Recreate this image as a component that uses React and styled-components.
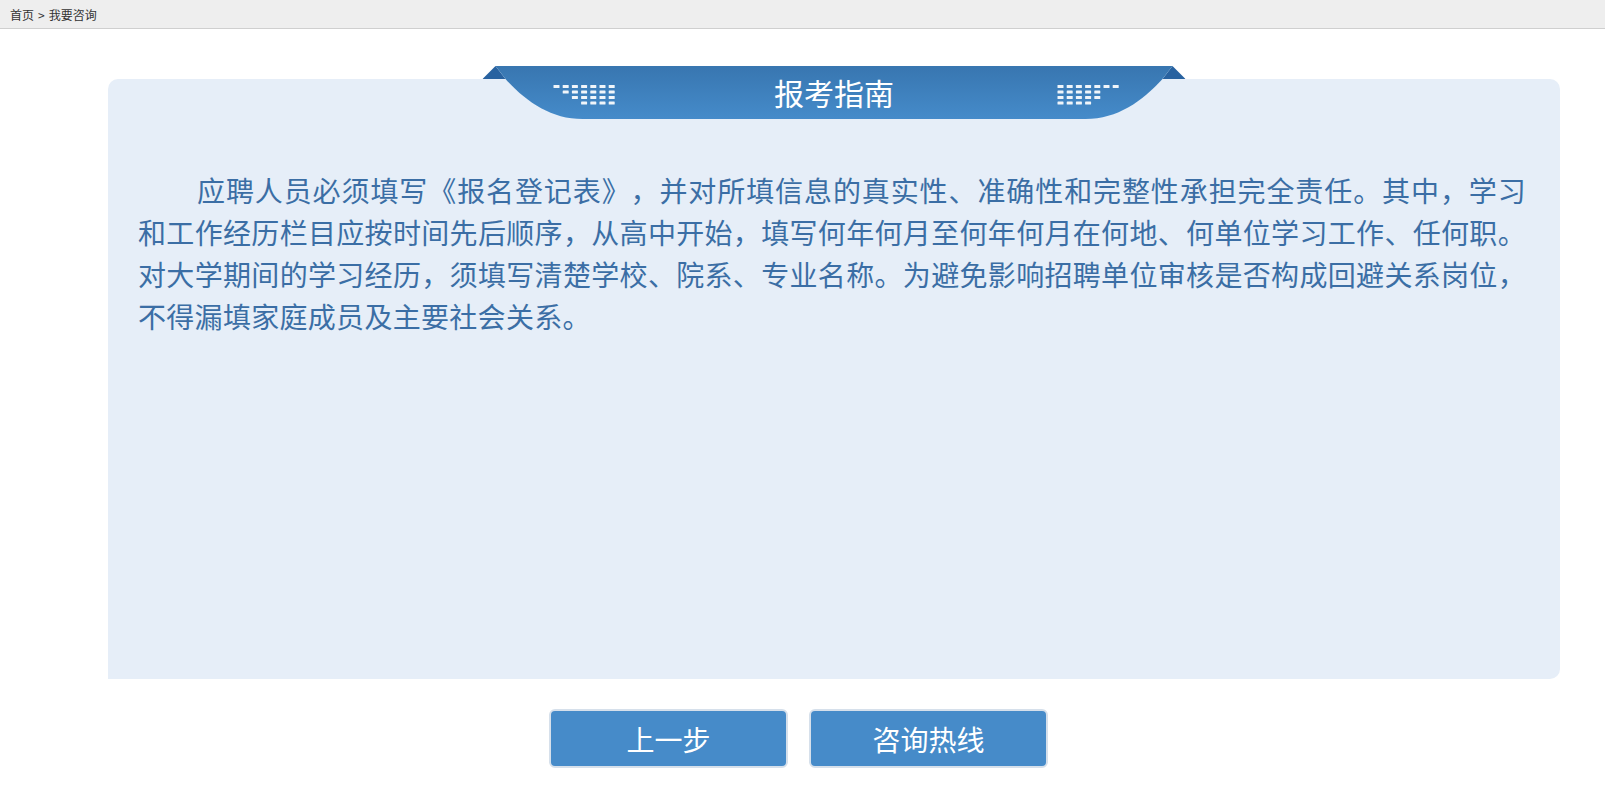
import styled, { createGlobalStyle } from "styled-components";

const GlobalStyle = createGlobalStyle`
  html, body {
    margin: 0;
    padding: 0;
    background: #fff;
    font-family: "Noto Sans CJK SC", "Noto Sans", sans-serif;
  }
`;

const Crumbs = styled.nav`
  height: 28px;
  background: #eeeeee;
  border-bottom: 1px solid #cfcfcf;
  display: flex;
  align-items: center;
  padding-left: 10px;
  font-size: 12px;
  color: #333;
  gap: 4px;
`;

const Main = styled.main`
  padding: 50px 45px 0 108px;
`;

const Panel = styled.section`
  position: relative;
  height: 600px;
  box-sizing: border-box;
  background: #e6eef8;
  border-radius: 10px 10px 10px 0;
  padding: 90px 34px 0 30px;
`;

const Banner = styled.div`
  position: absolute;
  top: -13px;
  left: 50%;
  transform: translateX(-50%);
  width: 703px;
  height: 53px;
  display: grid;
  & > * {
    grid-area: 1 / 1;
  }
`;

const BannerTitle = styled.h2`
  margin: 0;
  display: flex;
  align-items: center;
  justify-content: center;
  font-size: 30px;
  font-weight: normal;
  color: #fff;
  padding-bottom: 2px;
`;

const Guide = styled.p`
  margin: 0;
  font-size: 28px;
  line-height: 42px;
  letter-spacing: 0.3px;
  text-indent: 59px;
  text-align: justify;
  text-spacing-trim: space-all;
  color: #3b6ea5;
`;

const Actions = styled.div`
  display: flex;
  justify-content: center;
  gap: 21px;
  padding: 30px 8px 0 0;
`;

const Button = styled.button`
  width: 239px;
  height: 59px;
  box-sizing: border-box;
  background: #468bc9;
  border: 2px solid #d6e0eb;
  border-radius: 6px;
  color: #fff;
  font-family: "Noto Sans CJK SC", sans-serif;
  font-size: 28px;
  cursor: pointer;
`;

const Dots = ({ x0, rows, pitch = 9.2 }) =>
  rows.map(([from, to], r) =>
    Array.from({ length: to - from + 1 }, (_, i) => {
      const c = from + i;
      return (
        <rect
          key={`${r}-${c}`}
          x={x0 + c * pitch}
          y={19 + r * 5.5}
          width="6"
          height="3"
          rx="0.6"
          fill="#fff"
          opacity="0.92"
        />
      );
    })
  );

const BannerShape = () => (
  <svg width="703" height="53" viewBox="0 0 703 53">
    <defs>
      <linearGradient id="bannerGrad" x1="0" y1="0" x2="0" y2="1">
        <stop offset="0" stopColor="#3876b0" />
        <stop offset="1" stopColor="#458bca" />
      </linearGradient>
    </defs>
    <path d="M0 13 L13 0 L23 13 Z" fill="#2862a0" />
    <path d="M680 13 L690 0 L703 13 Z" fill="#2862a0" />
    <path
      d="M13 0 L690 0 L680 13 C660 35 635 53 603 53 L100 53 C68 53 43 35 23 13 Z"
      fill="url(#bannerGrad)"
    />
    <Dots x0={71} rows={[[0, 6], [1, 6], [2, 6], [3, 6]]} />
    <Dots x0={575} rows={[[0, 6], [0, 4], [0, 4], [0, 3]]} />
  </svg>
);

export default function App() {
  return (
    <>
      <GlobalStyle />
      <Crumbs>
        <span>首页</span>
        <span>&gt;</span>
        <span>我要咨询</span>
      </Crumbs>
      <Main>
        <Panel>
          <Banner>
            <BannerShape />
            <BannerTitle>报考指南</BannerTitle>
          </Banner>
          <Guide>
            应聘人员必须填写《报名登记表》，并对所填信息的真实性、准确性和完整性承担完全责任。其中，学习和工作经历栏目应按时间先后顺序，从高中开始，填写何年何月至何年何月在何地、何单位学习工作、任何职。对大学期间的学习经历，须填写清楚学校、院系、专业名称。为避免影响招聘单位审核是否构成回避关系岗位，不得漏填家庭成员及主要社会关系。
          </Guide>
        </Panel>
      </Main>
      <Actions>
        <Button>上一步</Button>
        <Button>咨询热线</Button>
      </Actions>
    </>
  );
}
